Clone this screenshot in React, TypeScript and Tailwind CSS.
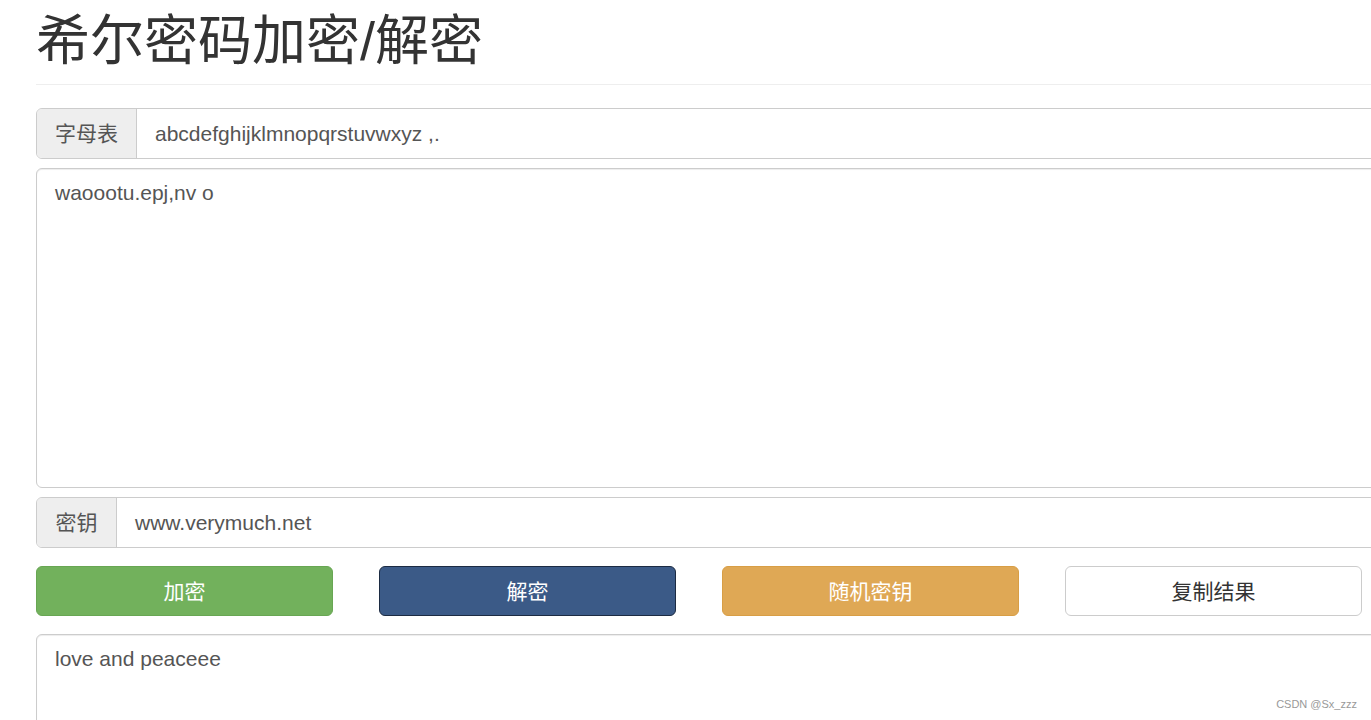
const font = "font-['Liberation_Sans','Noto_Sans_CJK_SC',sans-serif]";

const buttons = [
  { label: "加密", cls: "bg-[#72b15c] border-[#68a653] text-white" },
  { label: "解密", cls: "bg-[#3b5a87] border-[#1c2b42] text-white" },
  { label: "随机密钥", cls: "bg-[#dfa855] border-[#d89e45] text-white" },
  { label: "复制结果", cls: "bg-white border-[#cccccc] text-[#333333]" },
];

function InputGroup({ label, value, addonWidth }: { label: string; value: string; addonWidth: string }) {
  return (
    <div className="flex h-[51px] rounded-[6px] border border-[#cccccc] overflow-hidden shadow-[inset_0_1px_1px_rgba(0,0,0,0.075)]">
      <div className={`${addonWidth} shrink-0 bg-[#eeeeee] border-r border-[#cccccc] flex items-center justify-center text-[21px] text-[#555555]`}>
        {label}
      </div>
      <div className="flex-1 flex items-center pl-[18px] text-[21px] text-[#555555] bg-white">{value}</div>
    </div>
  );
}

export default function App() {
  return (
    <div className={`w-screen h-screen overflow-hidden bg-white relative ${font}`}>
      <div className="w-[1360px] ml-[36px]">
        <div className="pt-[12px] pb-[13px] border-b border-[#eeeeee]">
          <h1 className="text-[54px] leading-[1.1] text-[#333333] font-normal">希尔密码加密/解密</h1>
        </div>

        <div className="mt-[23px]">
          <InputGroup label="字母表" value="abcdefghijklmnopqrstuvwxyz ,." addonWidth="w-[100px]" />
        </div>

        <div className="mt-[9px] h-[320px] rounded-[6px] border border-[#cccccc] px-[18px] pt-[9px] text-[21px] leading-[1.43] text-[#555555] shadow-[inset_0_1px_1px_rgba(0,0,0,0.075)]">
          waoootu.epj,nv o
        </div>

        <div className="mt-[9px]">
          <InputGroup label="密钥" value="www.verymuch.net" addonWidth="w-[80px]" />
        </div>

        <div className="mt-[18px] flex gap-[46px]">
          {buttons.map((b) => (
            <button
              key={b.label}
              className={`w-[297px] h-[50px] rounded-[6px] border text-[21px] flex items-center justify-center ${b.cls}`}
            >
              {b.label}
            </button>
          ))}
        </div>

        <div className="mt-[18px] h-[200px] rounded-[6px] border border-[#cccccc] px-[18px] pt-[9px] text-[21px] leading-[1.43] text-[#555555] shadow-[inset_0_1px_1px_rgba(0,0,0,0.075)]">
          love and peaceee
        </div>
      </div>

      <div className="absolute right-[14px] bottom-[8px] text-[11px] text-[#999999] font-['Liberation_Sans',sans-serif]">
        CSDN @Sx_zzz
      </div>
    </div>
  );
}
